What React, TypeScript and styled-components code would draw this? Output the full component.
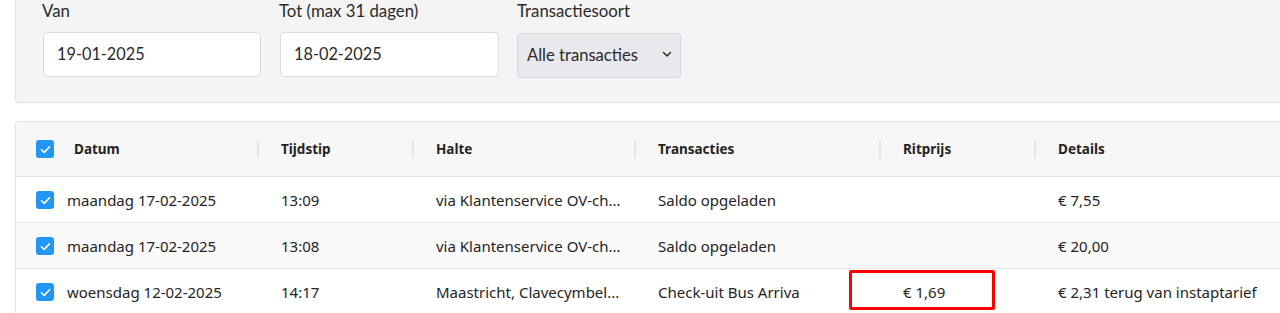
import React from "react";
import styled, { createGlobalStyle } from "styled-components";

const Global = createGlobalStyle`
  html, body { margin: 0; padding: 0; background: #ffffff; overflow: hidden; }
  body { width: 1280px; height: 313px; }
`;

const Page = styled.div`
  position: relative;
  width: 1280px;
  height: 313px;
  overflow: hidden;
`;

const FilterPanel = styled.div`
  margin-left: 15px;
  width: 1290px;
  box-sizing: border-box;
  background: #f4f4f4;
  border: 1px solid #e2e2e2;
  border-top: 0;
  border-radius: 0 0 4px 4px;
  padding: 0 0 24px 26px;
  display: flex;
  gap: 18px;
  font-family: "Lato", "Open Sans", sans-serif;
  color: #2a2a2a;
`;

const Field = styled.div`
  display: flex;
  flex-direction: column;
  gap: 11px;
`;

const Label = styled.label`
  font-size: 16.8px;
  line-height: 20px;
  padding-top: 1px;
`;

const TextInput = styled.div<{ $w: number }>`
  width: ${(p) => p.$w}px;
  height: 45px;
  box-sizing: border-box;
  margin-left: 1px;
  background: #fff;
  border: 1px solid #dcdcdc;
  border-radius: 4px;
  display: flex;
  align-items: center;
  padding: 0 0 2px 13px;
  font-size: 16.3px;
  color: #2a2a2a;
`;

const Select = styled.div`
  width: 164px;
  height: 45px;
  box-sizing: border-box;
  background: #e9e9ed;
  border: 1px solid #d6d6da;
  border-radius: 4px;
  display: flex;
  align-items: center;
  justify-content: space-between;
  padding: 0 8px 2px 9px;
  font-size: 16.6px;
  color: #2a2a2a;
  margin-top: 1px;
`;

const Table = styled.div`
  margin: 18px 0 0 15px;
  border: 1px solid #e3e3e6;
  border-right: 0;
  border-radius: 4px 0 0 0;
  font-family: "Noto Sans", "Open Sans", sans-serif;
  color: #242424;
  font-size: 15px;
`;

const cols = "243px 155px 222px 245px 155px 1fr";

const HeadRow = styled.div`
  display: grid;
  grid-template-columns: ${cols};
  height: 54px;
  align-items: center;
  background: #f7f7f8;
  border-bottom: 1px solid #e3e3e6;
`;

const HeadCell = styled.div<{ $sep?: boolean }>`
  display: flex;
  align-items: center;
  height: 100%;
  font-weight: 700;
  font-size: 13.5px;
  gap: 20px;
  position: relative;
  ${(p) =>
    p.$sep
      ? `&::before { content: ""; position: absolute; left: 0; top: 19px; width: 2px; height: 17px; background: #e1e5ea; }`
      : ""}
  ${(p) => (p.$sep ? "margin-left: -2px; padding-left: 24px;" : "padding-left: 20px;")}
`;

const Row = styled.div<{ $alt?: boolean }>`
  display: grid;
  grid-template-columns: ${cols};
  height: 46px;
  align-items: center;
  background: ${(p) => (p.$alt ? "#fafafb" : "#ffffff")};
  border-bottom: 1px solid #e8e8ec;
  box-sizing: border-box;
  padding-top: 1px;
`;

const Cell = styled.div<{ $first?: boolean }>`
  display: flex;
  align-items: center;
  gap: 13px;
  padding-left: ${(p) => (p.$first ? "20px" : "22px")};
  white-space: nowrap;
  position: relative;
`;

const Box = styled.span`
  width: 18px;
  height: 18px;
  border-radius: 3px;
  background: #2196f3;
  display: inline-flex;
  align-items: center;
  justify-content: center;
  flex: none;
`;

const Highlight = styled.div`
  position: absolute;
  left: 849px;
  top: 270px;
  width: 146px;
  height: 40px;
  box-sizing: border-box;
  border: 3px solid #ff0000;
  border-radius: 2px;
  pointer-events: none;
`;

const Check = () => (
  <Box>
    <svg width="13" height="13" viewBox="0 0 16 16" fill="none">
      <path d="M3 8.3 6.4 11.6 13 4.6" stroke="#fff" strokeWidth="2" strokeLinecap="round" strokeLinejoin="round" />
    </svg>
  </Box>
);

const rows = [
  { d: "maandag 17-02-2025", t: "13:09", h: "via Klantenservice OV-ch...", tr: "Saldo opgeladen", p: "", det: "€ 7,55" },
  { d: "maandag 17-02-2025", t: "13:08", h: "via Klantenservice OV-ch...", tr: "Saldo opgeladen", p: "", det: "€ 20,00" },
  { d: "woensdag 12-02-2025", t: "14:17", h: "Maastricht, Clavecymbel...", tr: "Check-uit Bus Arriva", p: "€ 1,69", det: "€ 2,31 terug van instaptarief" },
];

export default function App() {
  return (
    <Page>
      <Global />
      <FilterPanel>
        <Field>
          <Label>Van</Label>
          <TextInput $w={218}>19-01-2025</TextInput>
        </Field>
        <Field>
          <Label>Tot (max 31 dagen)</Label>
          <TextInput $w={219}>18-02-2025</TextInput>
        </Field>
        <Field>
          <Label>Transactiesoort</Label>
          <Select>
            <span>Alle transacties</span>
            <svg width="10" height="7" viewBox="0 0 10 7" fill="none">
              <path d="M1.5 1.5 5 5 8.5 1.5" stroke="#333" strokeWidth="1.6" strokeLinecap="round" strokeLinejoin="round" />
            </svg>
          </Select>
        </Field>
      </FilterPanel>
      <Table>
        <HeadRow>
          <HeadCell>
            <Check />
            <span>Datum</span>
          </HeadCell>
          <HeadCell $sep>Tijdstip</HeadCell>
          <HeadCell $sep>Halte</HeadCell>
          <HeadCell $sep>Transacties</HeadCell>
          <HeadCell $sep>Ritprijs</HeadCell>
          <HeadCell $sep>Details</HeadCell>
        </HeadRow>
        {rows.map((r, i) => (
          <Row key={i} $alt={i === 1}>
            <Cell $first>
              <Check />
              <span>{r.d}</span>
            </Cell>
            <Cell>{r.t}</Cell>
            <Cell>{r.h}</Cell>
            <Cell>{r.tr}</Cell>
            <Cell>{r.p}</Cell>
            <Cell>{r.det}</Cell>
          </Row>
        ))}
      </Table>
      <Highlight />
    </Page>
  );
}
